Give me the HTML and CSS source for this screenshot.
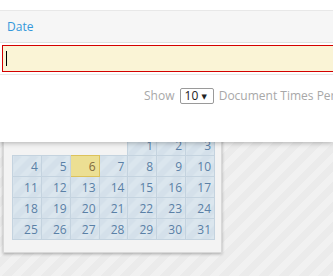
FILE: index.html
```html
<!DOCTYPE html>
<html lang="en">

<head>
    <meta charset="UTF-8">
    <meta name="viewport" content="width=device-width, initial-scale=1.0">
    <title>Date</title>
    <link rel="stylesheet" href="styles.css">
</head>

<body>
    <div class="panel">
        <div class="field-head">Date</div>
        <div class="field-row">
            <div class="date-input"><span class="caret"></span></div>
        </div>
        <div class="length-row">
            Show
            <span class="select">10 <span class="arrow">&#9660;</span></span>
            Document Times Per Page
        </div>
    </div>

    <div class="datepicker">
        <table class="calendar">
            <tr>
                <td class="empty"></td><td class="empty"></td><td class="empty"></td><td class="empty"></td>
                <td>1</td><td>2</td><td>3</td>
            </tr>
            <tr>
                <td>4</td><td>5</td><td class="today">6</td><td>7</td><td>8</td><td>9</td><td>10</td>
            </tr>
            <tr>
                <td>11</td><td>12</td><td>13</td><td>14</td><td>15</td><td>16</td><td>17</td>
            </tr>
            <tr>
                <td>18</td><td>19</td><td>20</td><td>21</td><td>22</td><td>23</td><td>24</td>
            </tr>
            <tr>
                <td>25</td><td>26</td><td>27</td><td>28</td><td>29</td><td>30</td><td>31</td>
            </tr>
        </table>
    </div>
</body>

</html>
```

FILE: styles.css
```css
html,
body {
    margin: 0;
    height: 100%;
    overflow: hidden;
}

body {
    font-family: "Open Sans", "DejaVu Sans", sans-serif;
    font-size: 12px;
    background-color: #ececec;
    background-image: repeating-linear-gradient(135deg, #ebebeb 0, #ebebeb 7px, #f1f1f1 7px, #f1f1f1 14px);
}

.panel {
    position: relative;
    z-index: 2;
    height: 142px;
    padding-top: 10px;
    box-sizing: border-box;
    background-color: #fff;
    box-shadow: 0 1px 5px rgba(0, 0, 0, 0.28);
}

.field-head {
    height: 31px;
    line-height: 31px;
    padding-left: 7px;
    color: #3498db;
    background-color: #f6f6f6;
    border-top: 1px solid #e8e8e8;
    border-bottom: 1px solid #e0e0e0;
}

.field-row {
    padding: 2px 0 2px 2px;
    border-bottom: 1px solid #e8e8e8;
}

.date-input {
    width: 360px;
    height: 25px;
    border: 1px solid #d40000;
    background-color: #faf4d6;
    display: flex;
    align-items: center;
}

.caret {
    width: 1px;
    height: 15px;
    margin-left: 3px;
    background-color: #000;
}

.length-row {
    margin-top: 13px;
    padding-left: 144px;
    white-space: nowrap;
    color: #a8a8a8;
    line-height: 16px;
}

.select {
    display: inline-block;
    box-sizing: border-box;
    width: 34px;
    height: 16px;
    line-height: 14px;
    margin: 0 2px;
    padding-left: 4px;
    border: 1px solid #9a9a9a;
    border-radius: 2px;
    color: #222;
}

.select .arrow {
    font-size: 7px;
    vertical-align: 1px;
}

.datepicker {
    position: absolute;
    z-index: 1;
    left: 3px;
    top: 100px;
    width: 219px;
    box-sizing: border-box;
    padding: 33px 8px 12px 8px;
    background-color: #f3f3f3;
    border: 1px solid #d8d8d8;
    box-shadow: 0 1px 3px rgba(0, 0, 0, 0.3);
}

.calendar {
    border-collapse: collapse;
    width: 203px;
}

.calendar td {
    height: 20px;
    padding: 0 3px 0 0;
    text-align: right;
    color: #5a80a6;
    border: 1px solid #c4d3df;
    background-color: #d6e2ec;
    background-image: repeating-linear-gradient(135deg, #d4e0ea 0, #d4e0ea 6px, #dbe6ee 6px, #dbe6ee 12px);
}

.calendar td.empty {
    border: none;
    background: none;
}

.calendar td.today {
    color: #806a3c;
    border-color: #dcc25c;
    background-color: #ecdf93;
    background-image: none;
}
```
